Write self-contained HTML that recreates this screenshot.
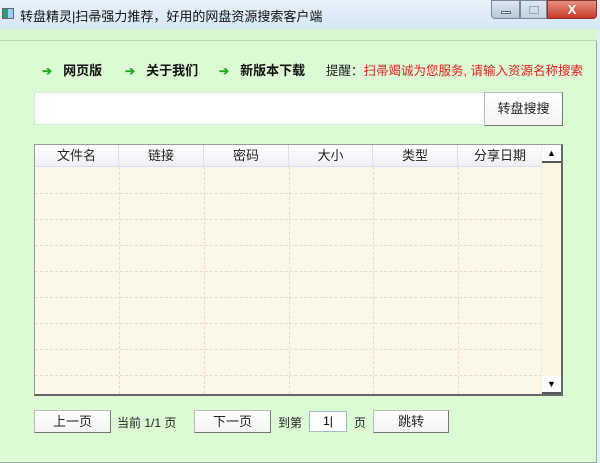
<!DOCTYPE html>
<html><head><meta charset="utf-8"><style>
*{margin:0;padding:0;box-sizing:border-box}
body{width:600px;height:463px;overflow:hidden;background:#dff0f8;font-family:"Liberation Sans","Noto Sans CJK SC",sans-serif;font-size:12px;position:relative}
.a{position:absolute}
.title{left:0;top:0;width:600px;height:30px;background:linear-gradient(#e8f2fa,#d4e6f4)}
.client{left:0;top:29px;width:597px;height:434px;background:#dcfad4;border-right:1px solid #9aa;border-bottom:1px solid #9aa}
.strip{left:0;top:29px;width:597px;height:12px;border-bottom:1px solid #b8d8b0;background:#d8f6d0}
.btn{background:linear-gradient(#fff,#f4f4f4);border:1px solid #bbb;border-right-color:#777;border-bottom-color:#777;text-align:center;font-size:13px;color:#222}
.nav{top:60px;font-weight:bold;font-size:13px;color:#111}
.arr{color:#2a2;font-size:12px;margin-right:11px}
.tbl{left:34px;top:144px;width:529px;height:252px;background:#fcf8e8;border:1px solid #999;border-right:2px solid #666;border-bottom:2px solid #666;overflow:hidden}
.hd{position:absolute;top:0;height:22px;line-height:22px;text-align:center;font-size:13px;background:linear-gradient(#fff,#eef0f4);border-right:1px solid #dde;border-bottom:1px solid #dde;color:#222}
.vl{position:absolute;top:22px;bottom:0;border-left:1px dashed #e2dcc8}
.hl{position:absolute;left:0;width:507px;border-top:1px dashed #e2dcc8}
.sb{position:absolute;right:0;top:0;width:20px;height:100%;background:#fbf6e2;border-left:1px solid #eee}
</style></head><body>
<div class="a title"></div>
<div class="a" style="left:2px;top:8px;width:12px;height:11px;background:linear-gradient(90deg,#396 50%,#9cf 50%);border:1px solid #666"></div>
<div class="a" style="left:20px;top:6px;font-size:13px;color:#111">转盘精灵|扫帚强力推荐，好用的网盘资源搜索客户端</div>
<div class="a" style="left:491px;top:0;width:29px;height:19px;background:linear-gradient(#dde8f2,#b8c8d8);border:1px solid #789;border-radius:0 0 0 4px"><div style="margin:10px auto 0;width:10px;height:3px;background:#fff;border:1px solid #567"></div></div>
<div class="a" style="left:520px;top:0;width:27px;height:19px;background:linear-gradient(#dde8f2,#c4d2e0);border:1px solid #789"><div style="margin:5px auto 0;width:10px;height:8px;border:1px solid #9ab"></div></div>
<div class="a" style="left:547px;top:0;width:50px;height:19px;background:linear-gradient(#e89080,#c83a28);border:1px solid #833;border-radius:0 0 4px 0;color:#fff;text-align:center;font-weight:bold;font-size:13px;line-height:17px">X</div>
<div class="a client"></div>
<div class="a strip"></div>
<div class="a nav" style="left:42px"><span class="arr">➔</span>网页版</div>
<div class="a nav" style="left:125px"><span class="arr">➔</span>关于我们</div>
<div class="a nav" style="left:219px"><span class="arr">➔</span>新版本下载</div>
<div class="a" style="left:326px;top:60px;font-size:12.5px"><span style="color:#222">提醒：</span><span style="color:#e02020">扫帚竭诚为您服务, 请输入资源名称搜索</span></div>
<div class="a" style="left:34px;top:92px;width:451px;height:33px;background:#fff;border:1px solid #d8e8d8"></div>
<div class="a btn" style="left:484px;top:92px;width:79px;height:34px;line-height:32px">转盘搜搜</div>
<div class="a tbl">
<div class="hd" style="left:0;width:84px">文件名</div>
<div class="hd" style="left:84px;width:85px">链接</div>
<div class="hd" style="left:169px;width:85px">密码</div>
<div class="hd" style="left:254px;width:84px">大小</div>
<div class="hd" style="left:338px;width:85px">类型</div>
<div class="hd" style="left:423px;width:85px">分享日期</div>
<div class="vl" style="left:84px"></div><div class="vl" style="left:169px"></div><div class="vl" style="left:254px"></div><div class="vl" style="left:338px"></div><div class="vl" style="left:423px"></div><div class="vl" style="left:507px"></div>
<div class="hl" style="top:48px"></div><div class="hl" style="top:74px"></div><div class="hl" style="top:100px"></div><div class="hl" style="top:126px"></div><div class="hl" style="top:152px"></div><div class="hl" style="top:178px"></div><div class="hl" style="top:204px"></div><div class="hl" style="top:230px"></div>
<div class="sb"><div style="height:18px;background:#fff;border-bottom:2px solid #555;text-align:center;font-size:9px;line-height:16px">▲</div><div style="position:absolute;bottom:0;width:19px;height:18px;background:#fff;border-bottom:2px solid #555;text-align:center;font-size:9px;line-height:16px">▼</div></div>
</div>
<div class="a btn" style="left:34px;top:410px;width:77px;height:23px;line-height:21px">上一页</div>
<div class="a" style="left:117px;top:414px;font-size:12px;color:#222">当前 1/1 页</div>
<div class="a btn" style="left:194px;top:410px;width:77px;height:23px;line-height:21px">下一页</div>
<div class="a" style="left:278px;top:414px;color:#222">到第</div>
<div class="a" style="left:309px;top:411px;width:38px;height:21px;background:#fff;border:1px solid #9bc;text-align:center;line-height:19px">1|</div>
<div class="a" style="left:354px;top:414px;color:#222">页</div>
<div class="a btn" style="left:373px;top:410px;width:76px;height:23px;line-height:21px">跳转</div>
</body></html>
